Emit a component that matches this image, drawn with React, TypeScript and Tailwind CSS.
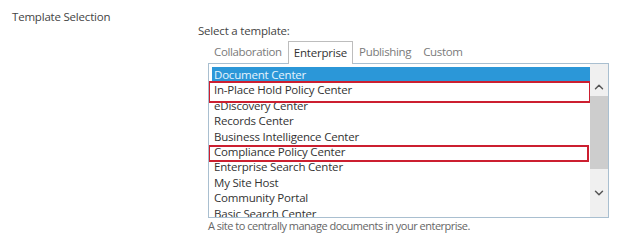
import { ChevronDown, ChevronUp } from "lucide-react";

const templates = [
  "Document Center",
  "In-Place Hold Policy Center",
  "eDiscovery Center",
  "Records Center",
  "Business Intelligence Center",
  "Compliance Policy Center",
  "Enterprise Search Center",
  "My Site Host",
  "Community Portal",
  "Basic Search Center",
];

const tabs = ["Collaboration", "Enterprise", "Publishing", "Custom"];

export default function App() {
  return (
    <div className="flex h-[246px] w-[624px] bg-white pl-[12px] pt-[9px] font-['Open_Sans',sans-serif] text-[11.5px] leading-[16px] tracking-[-0.2px] text-[#444]">
      <div className="w-[186px] shrink-0">Template Selection</div>

      <div className="flex flex-col pt-[14px]">
        <div>Select a template:</div>

        <div className="ml-[10px] flex h-[24px] items-end">
          {tabs.map((t) =>
            t === "Enterprise" ? (
              <div
                key={t}
                className="relative z-[1] -mb-px flex h-[23px] items-center border border-b-0 border-[#bdbdbd] bg-white px-[5px] text-[#333]"
              >
                {t}
              </div>
            ) : (
              <div
                key={t}
                className="flex h-[22px] items-center px-[6px] tracking-[-0.35px] text-[#7a7a7a]"
              >
                {t}
              </div>
            ),
          )}
        </div>

        <div className="ml-[10px] flex h-[155px] w-[401px] border border-[#a9bfd0]">
          <div className="relative flex-1 overflow-hidden pl-[3px] pt-[3px]">
            {templates.map((t, i) => (
              <div
                key={t}
                className={
                  i === 0
                    ? "h-[15.4px] bg-[#2b97d8] pl-[2px] leading-[16px] text-[#e6f4fd]"
                    : "h-[15.4px] pl-[2px] leading-[16px] text-[#333]"
                }
              >
                {t}
              </div>
            ))}
            <div className="absolute left-[-1px] top-[17px] h-[22px] w-[383px] border-2 border-[#cc1f30]" />
            <div className="absolute left-[-1px] top-[81px] h-[17px] w-[381px] border-2 border-[#cc1f30]" />
          </div>
          <div className="flex w-[18px] flex-col items-center bg-[#f0f0f0]">
            <ChevronUp className="mt-[16px] h-[14px] w-[14px] text-[#555]" strokeWidth={2.5} />
            <div className="mt-[2px] h-[73px] w-full bg-[#cdcdcd]" />
            <ChevronDown className="mt-[17px] h-[14px] w-[14px] text-[#555]" strokeWidth={2.5} />
          </div>
        </div>

        <div className="ml-[10px] text-[11px] tracking-[-0.5px] text-[#666]">
          A site to centrally manage documents in your enterprise.
        </div>
      </div>
    </div>
  );
}
